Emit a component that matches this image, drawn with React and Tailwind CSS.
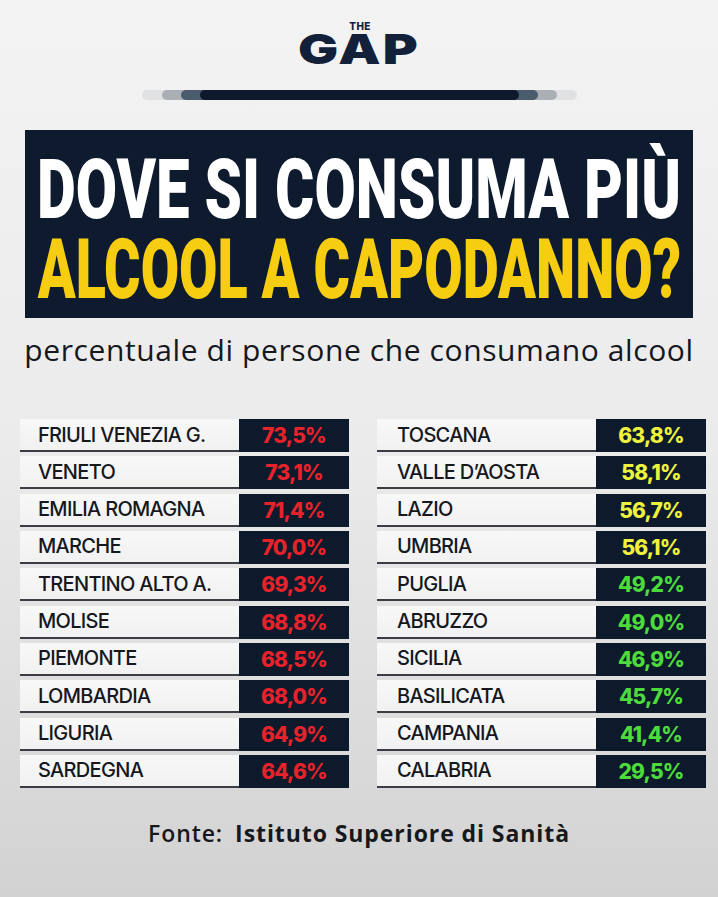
import React from "react";

const left = [
  ["FRIULI VENEZIA G.", "73,5%"],
  ["VENETO", "73,1%"],
  ["EMILIA ROMAGNA", "71,4%"],
  ["MARCHE", "70,0%"],
  ["TRENTINO ALTO A.", "69,3%"],
  ["MOLISE", "68,8%"],
  ["PIEMONTE", "68,5%"],
  ["LOMBARDIA", "68,0%"],
  ["LIGURIA", "64,9%"],
  ["SARDEGNA", "64,6%"],
];

const right = [
  ["TOSCANA", "63,8%", "y"],
  ["VALLE D\u2019AOSTA", "58,1%", "y"],
  ["LAZIO", "56,7%", "y"],
  ["UMBRIA", "56,1%", "y"],
  ["PUGLIA", "49,2%", "g"],
  ["ABRUZZO", "49,0%", "g"],
  ["SICILIA", "46,9%", "g"],
  ["BASILICATA", "45,7%", "g"],
  ["CAMPANIA", "41,4%", "g"],
  ["CALABRIA", "29,5%", "g"],
];

function Row({ name, value, color, pad }) {
  const colorClass =
    color === "r" ? "text-[#e8222b]" : color === "y" ? "text-[#eef23e]" : "text-[#4ddb3c]";
  return (
    <div className="flex h-[33px]">
      <div
        className={`flex-1 flex items-center border-b-2 border-[#3a3d43] bg-gradient-to-b from-[#f8f8f8] to-[#f1f1f1] ${pad}`}
      >
        <span className="text-[20px] font-medium tracking-[-0.035em] text-[#15181d] leading-none">
          {name}
        </span>
      </div>
      <div className="w-[110px] flex items-center justify-center bg-[#0d1a2c]">
        <span className={`text-[21px] font-extrabold tracking-[-0.04em] leading-none ${colorClass}`}>
          {value}
        </span>
      </div>
    </div>
  );
}

export default function App() {
  return (
    <div
      className="w-[718px] h-[897px] overflow-hidden bg-gradient-to-b from-[#f3f3f3] via-[#ebebeb] to-[#d2d2d2] flex flex-col items-center"
      style={{ fontFamily: "Inter, 'Noto Sans', sans-serif" }}
    >
      {/* Logo */}
      <div className="pt-[20px] flex flex-col items-center text-[#13203a]">
        <span className="h-[12px] text-[10px] font-extrabold leading-[12px] tracking-[0.04em] ml-[2px]">
          THE
        </span>
        <span className="inline-block h-[34px] text-[41px] font-black leading-[34px] tracking-[0.04em] scale-x-[1.3]">
          GAP
        </span>
      </div>

      {/* Decorative bar */}
      <div className="mt-[24px] h-[10px] w-[435px] rounded-full bg-[#dfe1e3] px-[20px]">
        <div className="h-full rounded-full bg-[#a9afb5] px-[19px]">
          <div className="h-full rounded-full bg-[#4a5b6b] px-[19px]">
            <div className="h-full rounded-full bg-[#0e1a2c]" />
          </div>
        </div>
      </div>

      {/* Title box */}
      <div
        className="mt-[30px] w-[668px] h-[188px] pt-[20px] bg-[#0e1b2e] flex flex-col items-center"
        style={{ fontFamily: "Roboto, 'DejaVu Sans Condensed', sans-serif" }}
      >
        <span className="inline-block h-[80px] whitespace-nowrap scale-x-[0.722] text-[83px] font-black leading-[80px] text-white">
          DOVE SI CONSUMA PIÙ
        </span>
        <span className="inline-block h-[80px] whitespace-nowrap scale-x-[0.671] text-[83px] font-black leading-[80px] text-[#f6cd10]">
          ALCOOL A CAPODANNO?
        </span>
      </div>

      {/* Subtitle */}
      <div
        className="mt-[14px] h-[36px] text-[30px] leading-[36px] tracking-[0.02em] text-[#15181d] whitespace-nowrap"
        style={{ fontFamily: "'Open Sans', sans-serif" }}
      >
        percentuale di persone che consumano alcool
      </div>

      {/* Table */}
      <div className="mt-[51px] w-full pl-[20px] pr-[12px] grid grid-cols-2 gap-x-[28px]">
        <div className="flex flex-col gap-[4.33px]">
          {left.map(([n, v]) => (
            <Row key={n} name={n} value={v} color="r" pad="pl-[18px]" />
          ))}
        </div>
        <div className="flex flex-col gap-[4.33px]">
          {right.map(([n, v, c]) => (
            <Row key={n} name={n} value={v} color={c} pad="pl-[20px]" />
          ))}
        </div>
      </div>

      {/* Footer */}
      <div
        className="mt-[32px] h-[26px] text-[23px] leading-[26px] tracking-[0.04em] text-[#15181d] whitespace-nowrap"
        style={{ fontFamily: "'Open Sans', sans-serif" }}
      >
        <span className="font-semibold">Fonte:</span>
        <span className="font-bold ml-[12px]">Istituto Superiore di Sanità</span>
      </div>
    </div>
  );
}
